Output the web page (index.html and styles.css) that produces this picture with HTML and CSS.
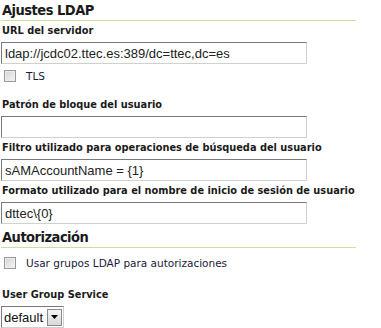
FILE: index.html
```html
<!DOCTYPE html>
<html>
<head>
<meta charset="utf-8">
<link rel="stylesheet" href="styles.css">
</head>
<body>
<div class="panel">
  <h2 class="section-title">Ajustes LDAP</h2>
  <div class="field">
    <label class="field-label">URL del servidor</label>
    <input class="text-input" type="text" value="ldap://jcdc02.ttec.es:389/dc=ttec,dc=es">
  </div>
  <div class="check-row">
    <span class="checkbox"></span>
    <span class="check-label">TLS</span>
  </div>
  <div class="field">
    <label class="field-label">Patrón de bloque del usuario</label>
    <input class="text-input" type="text" value="">
  </div>
  <div class="field">
    <label class="field-label">Filtro utilizado para operaciones de búsqueda del usuario</label>
    <input class="text-input" type="text" value="sAMAccountName = {1}">
  </div>
  <div class="field">
    <label class="field-label">Formato utilizado para el nombre de inicio de sesión de usuario</label>
    <input class="text-input" type="text" value="dttec\{0}">
  </div>
  <h2 class="section-title second">Autorización</h2>
  <div class="check-row second-check">
    <span class="checkbox"></span>
    <span class="check-label">Usar grupos LDAP para autorizaciones</span>
  </div>
  <div class="field">
    <label class="field-label">User Group Service</label>
    <div class="select-box">
      <span class="select-value">default</span>
      <span class="select-button"><svg width="7" height="4" viewBox="0 0 7 4"><path d="M0 0H7L3.5 4Z" fill="#000"/></svg></span>
    </div>
  </div>
</div>
</body>
</html>
```
FILE: styles.css
```css
html, body {
  margin: 0;
  padding: 0;
  background: #fff;
}
.panel {
  padding-left: 1px;
  font-family: "DejaVu Sans Condensed", "DejaVu Sans", sans-serif;
  color: #1a1a1a;
}
.section-title {
  width: 354px;
  margin: 0;
  padding: 1px 0 1px 1px;
  font-size: 14.5px;
  letter-spacing: -0.5px;
  line-height: 18px;
  font-weight: bold;
  border-bottom: 1px solid #c6e29c;
}
.section-title.second {
  margin-top: 3px;
}
.field {
  display: flex;
  flex-direction: column;
  align-items: flex-start;
}
.field-label {
  display: block;
  font-size: 10.9px;
  font-weight: bold;
  line-height: 14px;
  padding: 3px 0 0 1px;
  margin-bottom: 4px;
  white-space: nowrap;
}
.text-input {
  box-sizing: border-box;
  width: 306px;
  height: 22px;
  margin: 0;
  padding: 0 3px;
  border: 1px solid;
  border-color: #7a7a7a #d0d0d0 #d0d0d0 #7a7a7a;
  font-family: "Liberation Sans", Arial, sans-serif;
  font-size: 13px;
  color: #222;
  background: #fff;
  outline: none;
}
.check-row {
  display: flex;
  align-items: center;
  height: 12px;
  margin: 6px 0 13px 3px;
}
.check-row.second-check {
  margin: 9px 0 16px 3px;
}
.checkbox {
  box-sizing: border-box;
  width: 12px;
  height: 12px;
  border: 1px solid #9a9a9a;
  background: linear-gradient(135deg, #d4d4d4, #f6f6f6);
  box-shadow: inset 0 0 0 1px #ececec;
}
.check-label {
  margin-left: 10px;
  font-family: "DejaVu Sans", sans-serif;
  font-size: 10.5px;
  line-height: 14px;
  color: #1a1a3a;
}
.select-box {
  display: flex;
  align-items: center;
  box-sizing: border-box;
  width: 63px;
  height: 22px;
  padding: 0 1px 0 2px;
  border: 1px solid;
  border-color: #7a7a7a #d0d0d0 #d0d0d0 #7a7a7a;
  font-family: "Liberation Sans", Arial, sans-serif;
  font-size: 13px;
  color: #111;
}
.select-value {
  flex: 1;
}
.select-button {
  box-sizing: border-box;
  width: 15px;
  height: 17px;
  display: flex;
  align-items: center;
  justify-content: center;
  border: 1px solid #8a8a8a;
  background: linear-gradient(#f6f6f6, #d8d8d8);
}
```
